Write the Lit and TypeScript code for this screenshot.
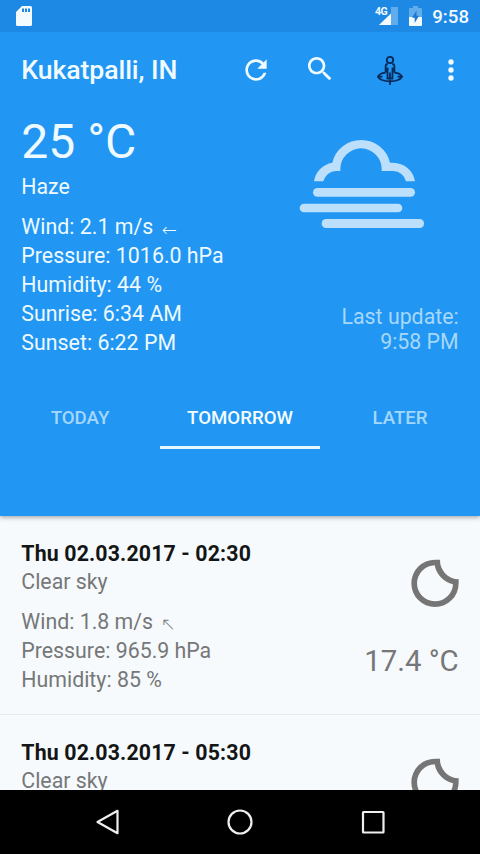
import { LitElement, html, css, svg, nothing } from "lit";
import { customElement, property } from "lit/decorators.js";

interface Details {
  wind: string;
  arrow: string;
  pressure: string;
  humidity: string;
  temp: string;
}

interface Forecast {
  when: string;
  sky: string;
  details?: Details;
}

const forecasts: Forecast[] = [
  {
    when: "Thu 02.03.2017 - 02:30",
    sky: "Clear sky",
    details: { wind: "1.8 m/s", arrow: "↖", pressure: "965.9 hPa", humidity: "85 %", temp: "17.4 °C" },
  },
  { when: "Thu 02.03.2017 - 05:30", sky: "Clear sky" },
];

@customElement("status-bar")
export class StatusBar extends LitElement {
  static styles = css`
    :host {
      display: flex;
      align-items: center;
      height: 32px;
      flex: none;
      padding: 0 11px 0 16px;
      background: #1e88e5;
      color: #f1fbff;
    }
    svg { display: block; flex: none; }
    .spacer { flex: 1; }
    .net {
      font-size: 10.5px;
      font-weight: 700;
      line-height: 10px;
      align-self: flex-start;
      margin-top: 6.5px;
      margin-right: -8px;
      letter-spacing: -0.4px;
      z-index: 1;
    }
    .battery { margin: 0 10px 0 11px; }
    .clock { font-size: 18.67px; font-weight: 500; line-height: 22px; margin-top: 2px; }
  `;
  render() {
    return html`
      <svg width="16" height="20" viewBox="0 0 16 20">
        <path fill="#f4fbff" fill-rule="evenodd" d="M6 0H14.5Q16 0 16 1.5V18.5Q16 20 14.5 20H1.5Q0 20 0 18.5V6ZM6 2.500V6H8V2.500ZM9 2.500V6H11V2.500ZM12 2.500V6H14V2.500Z" />
      </svg>
      <div class="spacer"></div>
      <div class="net">4G</div>
      <svg width="19" height="18" viewBox="0 0 19 18">
        <path fill="#fff" fill-opacity=".3" d="M19 0V18H0L12 6.600V0Z" />
        <path fill="#f4fbff" d="M12 6.600V18H0Z" />
      </svg>
      <svg class="battery" width="13" height="20" viewBox="0 0 13 20">
        <path fill="#fff" fill-opacity=".3" d="M4 0H9V2H12Q13 2 13 3V11H0V3Q0 2 1 2H4Z" />
        <path fill="#f4fbff" d="M0 11H13V19Q13 20 12 20H1Q0 20 0 19Z" />
        <path fill="#1e78cf" d="M7.500 4.500L3 11.800H5.700V17L10 9.700H7.500Z" />
      </svg>
      <div class="clock">9:58</div>
    `;
  }
}

@customElement("tool-bar")
export class ToolBar extends LitElement {
  static styles = css`
    :host {
      display: flex;
      align-items: center;
      height: 77px;
      flex: none;
      padding: 0 13.3px 0 21.3px;
      color: #f1fbff;
    }
    .title {
      flex: 1;
      font-size: 26.67px;
      font-weight: 500;
      line-height: 32px;
      letter-spacing: -0.1px;
      margin-top: -1px;
      white-space: nowrap;
    }
    svg { display: block; flex: none; width: 32px; height: 32px; }
    .refresh { margin-right: 32px; margin-top: -2px; }
    .search { margin-right: 38px; margin-top: -3px; }
    .locate { margin-right: 28.7px; }
    .more { margin-top: -2px; }
  `;
  render() {
    return html`
      <div class="title">Kukatpalli, IN</div>
      <svg class="refresh" viewBox="0 0 24 24" fill="currentColor">
        <path d="M17.65 6.35C16.2 4.900 14.210 4 12 4c-4.420 0-7.990 3.580-7.990 8s3.570 8 7.990 8c3.730 0 6.840-2.550 7.730-6h-2.080c-.82 2.330-3.040 4-5.650 4-3.310 0-6-2.690-6-6s2.690-6 6-6c1.660 0 3.140.69 4.220 1.780L13 11h7V4l-2.350 2.350z" />
      </svg>
      <svg class="search" viewBox="0 0 24 24" fill="currentColor">
        <path d="M15.500 14h-.79l-.28-.27C15.410 12.590 16 11.110 16 9.500 16 5.910 13.090 3 9.500 3S3 5.910 3 9.500 5.910 16 9.500 16c1.610 0 3.090-.59 4.230-1.570l.27.28v.79l5 4.990L20.490 19l-4.990-5zm-6 0C7.010 14 5 11.990 5 9.500S7.010 5 9.500 5 14 7.010 14 9.500 11.990 14 9.500 14z" />
      </svg>
      <svg class="locate" viewBox="0 0 32 32" fill="none" stroke="#062a58" stroke-width="1.800">
        <circle cx="16" cy="5" r="3.200" />
        <path d="M13.700 9Q11.600 9.300 11.600 11.500V16.500H13.500V23.500H18.500V16.500H20.400V11.500Q20.400 9.300 18.300 9M13.500 12.500V17M18.500 12.500V17M16 17.500V23.500" />
        <path d="M11.600 17.600C3.500 18.700 2.500 22.500 8 25C12.500 26.900 19.500 26.900 24 25C29.500 22.500 28.500 18.700 20.400 17.600" />
        <path d="M3 21.700H8.500M23.500 21.700H29M16 24.500V30" />
      </svg>
      <svg class="more" viewBox="0 0 24 24" fill="currentColor">
        <circle cx="12" cy="6" r="2" /><circle cx="12" cy="12" r="2" /><circle cx="12" cy="18" r="2" />
      </svg>
    `;
  }
}

@customElement("current-weather")
export class CurrentWeather extends LitElement {
  static styles = css`
    :host {
      display: flex;
      justify-content: space-between;
      flex: none;
      height: 276px;
      box-sizing: border-box;
      padding: 4px 21.3px 0;
      color: #eefaff;
      font-size: 21.33px;
      line-height: 28.9px;
      white-space: nowrap;
    }
    .temp { font-size: 48px; line-height: 58px; }
    .sky { margin-top: 2px; }
    .details { margin-top: 11px; letter-spacing: 0.02px; }
    .arrow { display: inline-block; font: 200 18px/1 "DejaVu Sans", sans-serif; margin-left: 3px; transform: translateY(1.5px); }
    .side { display: flex; flex-direction: column; align-items: flex-end; }
    .haze { display: block; width: 128px; height: 92px; margin: 25px 32.7px 0 0; }
    .updated { margin-top: 73.500px; line-height: 25.500px; text-align: right; color: #a6d8fb; }
  `;
  render() {
    return html`
      <div>
        <div class="temp">25 °C</div>
        <div class="sky">Haze</div>
        <div class="details">
          <div>Wind: 2.1 m/s <span class="arrow">←</span></div>
          <div>Pressure: 1016.0 hPa</div>
          <div>Humidity: 44 %</div>
          <div>Sunrise: 6:34 AM</div>
          <div>Sunset: 6:22 PM</div>
        </div>
      </div>
      <div class="side">
        <svg class="haze" viewBox="54 54 384 276" fill="#bce0fb">
          <path d="M102 184A67 67 0 0 1 157 128A89 89 0 0 1 330 128H340A67 67 0 0 1 405 184H378A41 41 0 0 0 340 153H305V147A62 62 0 0 0 181 147V153H168A41 41 0 0 0 130 184Z" />
          <rect x="99" y="204" width="306" height="26" rx="13" />
          <rect x="59" y="251" width="308" height="26" rx="13" />
          <rect x="125" y="297" width="307" height="27" rx="13" />
        </svg>
        <div class="updated">Last update:<br />9:58 PM</div>
      </div>
    `;
  }
}

@customElement("day-tabs")
export class DayTabs extends LitElement {
  static styles = css`
    :host { display: grid; grid-template-columns: repeat(3, 1fr); height: 64px; flex: none; }
    .tab {
      display: flex;
      align-items: center;
      justify-content: center;
      box-sizing: border-box;
      border-top: 5px solid transparent;
      border-bottom: 3px solid transparent;
      font-size: 18.67px;
      font-weight: 500;
      color: #a3d7fb;
    }
    .active { color: #f4fcff; border-bottom-color: #e4f9ff; }
  `;
  render() {
    return ["TODAY", "TOMORROW", "LATER"].map(
      (t) => html`<div class="tab ${t === "TOMORROW" ? "active" : ""}">${t}</div>`
    );
  }
}

@customElement("forecast-row")
export class ForecastRow extends LitElement {
  @property({ attribute: false }) data!: Forecast;
  static styles = css`
    :host {
      display: flex;
      justify-content: space-between;
      flex: none;
      box-sizing: border-box;
      height: 199px;
      padding: 24px 21.3px 0;
      border-bottom: 1.5px solid #e6eaec;
      color: #757778;
      font-size: 21.33px;
      line-height: 28.9px;
      white-space: nowrap;
    }
    .when { font-weight: 700; color: #131516; letter-spacing: 0.14px; }
    .details { margin-top: 11px; }
    .arrow { display: inline-block; font: 200 18px/1 "DejaVu Sans", sans-serif; margin-left: 2px; transform: translateY(1px); }
    .side { display: flex; flex-direction: column; align-items: flex-end; }
    .moon { display: block; width: 50px; height: 50px; margin: 18.5px -1.3px 0 0; }
    .temp { font-size: 29.33px; line-height: 36px; margin-top: 34.5px; }
  `;
  render() {
    const { when, sky, details: d } = this.data;
    return html`
      <div>
        <div class="when">${when}</div>
        <div>${sky}</div>
        ${d
          ? html`<div class="details">
              <div>Wind: ${d.wind} <span class="arrow">${d.arrow}</span></div>
              <div>Pressure: ${d.pressure}</div>
              <div>Humidity: ${d.humidity}</div>
            </div>`
          : nothing}
      </div>
      <div class="side">
        <svg class="moon" viewBox="180 54 150 150" fill="#757575" fill-rule="evenodd">
          <path d="M270 59A57 57 0 0 0 326 118V130A71 71 0 1 1 255 59ZM254 76A54 54 0 1 0 309 133A73 73 0 0 1 254 76Z" />
        </svg>
        ${d ? html`<div class="temp">${d.temp}</div>` : nothing}
      </div>
    `;
  }
}

@customElement("nav-bar")
export class NavBar extends LitElement {
  static styles = css`
    :host { display: flex; justify-content: center; align-items: center; gap: 101px; height: 64px; flex: none; background: #000; }
    svg { display: block; width: 32px; height: 32px; fill: none; stroke: #efefef; stroke-width: 2.2; }
  `;
  render() {
    const shapes = [
      svg`<path stroke-linejoin="round" d="M6.500 16L26.500 4.800V27.200Z" />`,
      svg`<circle cx="16" cy="16" r="11.500" />`,
      svg`<rect x="6" y="6" width="20.500" height="20.500" rx="0.500" />`,
    ];
    return shapes.map((s) => html`<svg viewBox="0 0 32 32">${s}</svg>`);
  }
}

@customElement("app-root")
export class AppRoot extends LitElement {
  static styles = css`
    :host {
      display: flex;
      flex-direction: column;
      width: 480px;
      height: 854px;
      overflow: hidden;
      background: #f7fafc;
      font-family: Roboto, sans-serif;
    }
    .hero {
      display: flex;
      flex-direction: column;
      flex: none;
      height: 515.5px;
      background: #2196f3;
      box-shadow: 0 1px 5px rgba(0, 0, 0, 0.4);
      z-index: 1;
    }
    .list { flex: 1; min-height: 0; overflow: hidden; display: flex; flex-direction: column; }
  `;
  render() {
    return html`
      <div class="hero">
        <status-bar></status-bar>
        <tool-bar></tool-bar>
        <current-weather></current-weather>
        <day-tabs></day-tabs>
      </div>
      <div class="list">${forecasts.map((f) => html`<forecast-row .data=${f}></forecast-row>`)}</div>
      <nav-bar></nav-bar>
    `;
  }
}
